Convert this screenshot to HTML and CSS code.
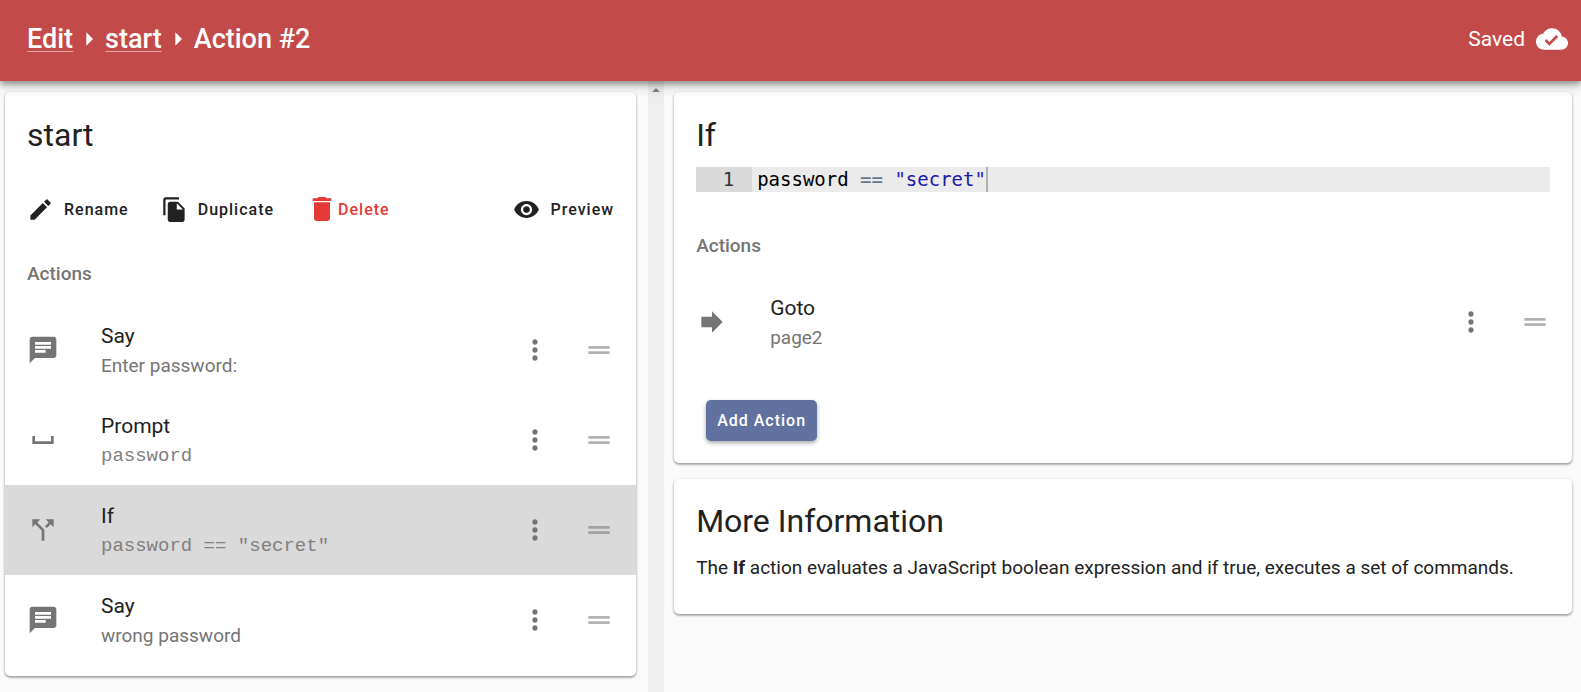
FILE: index.html
```
<!DOCTYPE html>
<html lang="en">
<head>
<meta charset="utf-8">
<meta name="viewport" content="width=device-width, initial-scale=1">
<title>Edit - start - Action #2</title>
<link rel="stylesheet" href="styles.css">
</head>
<body>
<svg class="symbols" aria-hidden="true">
  <symbol id="arrow-right" viewBox="0 0 24 24"><path d="M10 17l5-5-5-5z"/></symbol>
  <symbol id="cloud-done" viewBox="0 0 24 24"><path d="M19.35 10.04C18.67 6.59 15.64 4 12 4 9.11 4 6.6 5.64 5.35 8.04 2.34 8.36 0 10.91 0 14c0 3.31 2.69 6 6 6h13c2.76 0 5-2.24 5-5 0-2.64-2.05-4.78-4.65-4.96zM10 17l-3.5-3.5 1.41-1.41L10 14.17 15.18 9l1.41 1.41L10 17z"/></symbol>
  <symbol id="edit" viewBox="0 0 24 24"><path d="M3 17.25V21h3.75L17.81 9.94l-3.75-3.75L3 17.25zM20.71 7.04c.39-.39.39-1.02 0-1.41l-2.34-2.34c-.39-.39-1.02-.39-1.41 0l-1.83 1.83 3.75 3.75 1.83-1.83z"/></symbol>
  <symbol id="file-copy" viewBox="0 0 24 24"><path d="M16 1H4c-1.1 0-2 .9-2 2v14h2V3h12V1zm-1 4l6 6v10c0 1.1-.9 2-2 2H7.99C6.89 23 6 22.1 6 21l.01-14c0-1.1.89-2 1.99-2h7zm-1 7h5.5L14 6.5V12z"/></symbol>
  <symbol id="delete" viewBox="0 0 24 24"><path d="M6 19c0 1.1.9 2 2 2h8c1.1 0 2-.9 2-2V7H6v12zM19 4h-3.5l-1-1h-5l-1 1H5v2h14V4z"/></symbol>
  <symbol id="visibility" viewBox="0 0 24 24"><path d="M12 4.5C7 4.5 2.73 7.61 1 12c1.73 4.39 6 7.5 11 7.5s9.27-3.11 11-7.5c-1.73-4.39-6-7.5-11-7.5zM12 17c-2.76 0-5-2.24-5-5s2.24-5 5-5 5 2.24 5 5-2.24 5-5 5zm0-8c-1.66 0-3 1.34-3 3s1.34 3 3 3 3-1.34 3-3-1.34-3-3-3z"/></symbol>
  <symbol id="chat" viewBox="0 0 24 24"><path d="M20 2H4c-1.1 0-1.99.9-1.99 2L2 22l4-4h14c1.1 0 2-.9 2-2V4c0-1.1-.9-2-2-2zM6 9h12v2H6V9zm8 5H6v-2h8v2zm4-6H6V6h12v2z"/></symbol>
  <symbol id="space-bar" viewBox="0 0 24 24"><path d="M18 9v4H6V9H4v6h16V9z"/></symbol>
  <symbol id="call-split" viewBox="0 0 24 24"><path d="M14 4l2.29 2.29-2.88 2.88 1.42 1.42 2.88-2.88L20 10V4zm-4 0H4v6l2.29-2.29 4.71 4.7V20h2v-8.41l-5.29-5.3z"/></symbol>
  <symbol id="forward" viewBox="0 0 24 24"><path d="M12 8V4l8 8-8 8v-4H4V8z"/></symbol>
  <symbol id="more-vert" viewBox="0 0 24 24"><path d="M12 8c1.1 0 2-.9 2-2s-.9-2-2-2-2 .9-2 2 .9 2 2 2zm0 2c-1.1 0-2 .9-2 2s.9 2 2 2 2-.9 2-2-.9-2-2-2zm0 6c-1.1 0-2 .9-2 2s.9 2 2 2 2-.9 2-2-.9-2-2-2z"/></symbol>
  <symbol id="drag-handle" viewBox="0 0 24 24"><path d="M20 9H4v2h16V9zM4 15h16v-2H4v2z"/></symbol>
</svg>

<header class="topbar">
  <nav class="breadcrumb" aria-label="Breadcrumb">
    <a href="#edit">Edit</a>
    <svg class="icon"><use href="#arrow-right"/></svg>
    <a href="#start">start</a>
    <svg class="icon"><use href="#arrow-right"/></svg>
    <span>Action #2</span>
  </nav>
  <div class="status"><span>Saved</span><svg class="icon"><use href="#cloud-done"/></svg></div>
</header>

<main class="panes">
  <section class="pane pane-list">
    <article class="card">
      <h2 class="card-title">start</h2>
      <div class="toolbar">
        <button class="tool" type="button"><svg class="icon icon-small"><use href="#edit"/></svg>Rename</button>
        <button class="tool" type="button"><svg class="icon icon-small"><use href="#file-copy"/></svg>Duplicate</button>
        <button class="tool tool-danger" type="button"><svg class="icon"><use href="#delete"/></svg>Delete</button>
        <button class="tool tool-end" type="button"><svg class="icon icon-small"><use href="#visibility"/></svg>Preview</button>
      </div>
      <h3 class="subheader">Actions</h3>
      <ul class="actions">
        <li class="action">
          <svg class="icon"><use href="#chat"/></svg>
          <div class="action-text"><span class="primary">Say</span><span class="secondary">Enter password:</span></div>
          <button class="icon-button" type="button" aria-label="More"><svg class="icon"><use href="#more-vert"/></svg></button>
          <svg class="icon handle"><use href="#drag-handle"/></svg>
        </li>
        <li class="action">
          <svg class="icon"><use href="#space-bar"/></svg>
          <div class="action-text"><span class="primary">Prompt</span><code class="secondary mono">password</code></div>
          <button class="icon-button" type="button" aria-label="More"><svg class="icon"><use href="#more-vert"/></svg></button>
          <svg class="icon handle"><use href="#drag-handle"/></svg>
        </li>
        <li class="action selected">
          <svg class="icon"><use href="#call-split"/></svg>
          <div class="action-text"><span class="primary">If</span><code class="secondary mono">password == "secret"</code></div>
          <button class="icon-button" type="button" aria-label="More"><svg class="icon"><use href="#more-vert"/></svg></button>
          <svg class="icon handle"><use href="#drag-handle"/></svg>
        </li>
        <li class="action">
          <svg class="icon"><use href="#chat"/></svg>
          <div class="action-text"><span class="primary">Say</span><span class="secondary">wrong password</span></div>
          <button class="icon-button" type="button" aria-label="More"><svg class="icon"><use href="#more-vert"/></svg></button>
          <svg class="icon handle"><use href="#drag-handle"/></svg>
        </li>
      </ul>
    </article>
  </section>

  <div class="scroll-track" aria-hidden="true"><span class="scroll-arrow"></span></div>

  <section class="pane pane-detail">
    <article class="card">
      <h2 class="card-title">If</h2>
      <div class="editor">
        <span class="gutter">1</span>
        <code class="line" contenteditable="true" spellcheck="false" role="textbox" aria-label="Condition">password <span class="operator">==</span> <span class="string">"secret"</span></code>
        <span class="cursor"></span>
      </div>
      <h3 class="subheader">Actions</h3>
      <ul class="actions">
        <li class="action">
          <svg class="icon"><use href="#forward"/></svg>
          <div class="action-text"><span class="primary">Goto</span><span class="secondary">page2</span></div>
          <button class="icon-button" type="button" aria-label="More"><svg class="icon"><use href="#more-vert"/></svg></button>
          <svg class="icon handle"><use href="#drag-handle"/></svg>
        </li>
      </ul>
      <button class="raised" type="button">Add Action</button>
    </article>

    <article class="card info">
      <h2 class="card-title">More Information</h2>
      <p class="body">The <b>If</b> action evaluates a JavaScript boolean expression and if true, executes a set of commands.</p>
    </article>
  </section>
</main>
</body>
</html>
```

FILE: styles.css
```
* {
  box-sizing: border-box;
}

body {
  margin: 0;
  min-height: 100vh;
  display: flex;
  flex-direction: column;
  background: #fafafa;
  color: #212121;
  font-family: Roboto, "Liberation Sans", sans-serif;
}

h2, h3, p, ul {
  margin: 0;
  padding: 0;
  font-weight: 400;
}

button {
  padding: 0;
  border: 0;
  background: none;
  color: inherit;
  font-family: inherit;
  cursor: pointer;
}

.symbols {
  display: none;
}

.icon {
  display: block;
  flex: none;
  width: 32px;
  height: 32px;
  fill: currentColor;
}

.icon-small {
  width: 27px;
  height: 27px;
  margin-right: 10px;
}

/* Top bar */

.topbar {
  position: relative;
  display: flex;
  align-items: center;
  justify-content: space-between;
  min-height: 81px;
  padding: 0 13px 4px 27px;
  background: #c24a48;
  color: #fff;
  box-shadow: 0 3px 6px rgba(0, 0, 0, 0.35), 0 5px 13px rgba(0, 0, 0, 0.16);
}

.breadcrumb {
  display: flex;
  align-items: center;
  font-size: 27px;
  font-weight: 500;
  line-height: 32px;
}

.breadcrumb a {
  color: inherit;
  text-decoration: underline;
  text-decoration-color: rgba(255, 255, 255, 0.5);
  text-decoration-thickness: 1px;
  text-underline-offset: 3px;
  text-decoration-skip-ink: none;
}

.status {
  display: flex;
  align-items: center;
  gap: 11px;
  font-size: 21px;
}

/* Panes */

.panes {
  flex: 1;
  display: grid;
  grid-template-columns: 41fr 16px 58fr;
}

.pane {
  min-width: 0;
}

.pane-list {
  padding: 11px 12px 16px 5px;
}

.pane-detail {
  display: flex;
  flex-direction: column;
  gap: 16px;
  padding: 11px 9px 16px 10px;
}

.scroll-track {
  display: flex;
  justify-content: center;
  padding-top: 7px;
  background: #eee;
}

.scroll-arrow {
  width: 0;
  height: 0;
  border: 4px solid transparent;
  border-top: 0;
  border-bottom-color: #858585;
}

/* Cards */

.card {
  padding: 23px 0 11px;
  border-radius: 5px;
  background: #fff;
  box-shadow: 0 1px 3px rgba(0, 0, 0, 0.3), 0 2px 2px rgba(0, 0, 0, 0.16);
}

.card-title {
  padding: 0 22px;
  font-size: 32px;
  line-height: 40px;
}

.toolbar {
  display: flex;
  flex-wrap: wrap;
  gap: 0 32px;
  padding: 30px 22px 27px;
}

.tool {
  display: flex;
  align-items: center;
  height: 48px;
  font-size: 16px;
  font-weight: 500;
  letter-spacing: 1px;
}

.tool-danger {
  color: #e53935;
}

.tool-end {
  margin-left: auto;
}

.subheader {
  padding: 0 22px;
  color: #757575;
  font-size: 19px;
  font-weight: 500;
  line-height: 28px;
}

/* Action rows */

.actions {
  padding-top: 17px;
  list-style: none;
}

.action {
  display: flex;
  align-items: center;
  min-height: 90px;
  padding: 0 21px 0 22px;
  color: #757575;
}

.action.selected {
  background: #dadada;
}

.action-text {
  flex: 1;
  min-width: 0;
  display: flex;
  flex-direction: column;
  margin-left: 42px;
  padding-top: 2px;
  line-height: 30px;
}

.primary {
  color: #212121;
  font-size: 21px;
}

.secondary {
  font-size: 19px;
}

.mono {
  color: #808080;
  font-family: "Liberation Mono", monospace;
}

.handle {
  margin-left: 32px;
  opacity: 0.55;
}

/* Code editor */

.editor {
  display: flex;
  margin: 12px 22px 40px;
  background: #ebebeb;
  font-family: "DejaVu Sans Mono", monospace;
  font-size: 19px;
  line-height: 25px;
}

.gutter {
  width: 56px;
  padding-right: 18px;
  margin-right: 5px;
  background: #dadada;
  color: #333;
  text-align: right;
}

.line {
  color: #000;
  font-family: inherit;
  outline: 0;
}

.operator {
  color: #687687;
}

.string {
  color: #1a1aa6;
}

.cursor {
  width: 2px;
  background: #b0b0b0;
}

.raised {
  display: block;
  height: 41px;
  margin: 33px 32px 11px;
  padding: 0 11px;
  border-radius: 5px;
  background: #6272a0;
  color: #fff;
  font-size: 16px;
  font-weight: 500;
  letter-spacing: 1px;
  box-shadow: 0 2px 4px rgba(0, 0, 0, 0.35);
}

.info {
  padding: 22px 0 32px;
}

.body {
  padding: 13px 22px 0;
  font-size: 19px;
  line-height: 28px;
}
```
